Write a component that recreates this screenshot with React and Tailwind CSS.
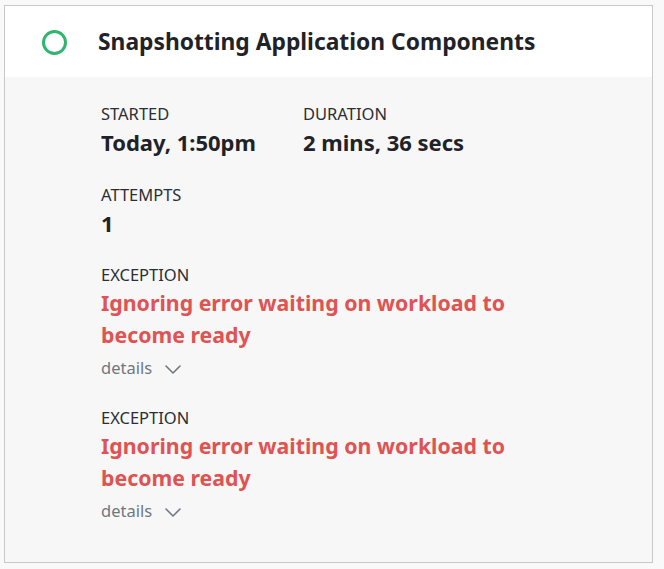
const font = { fontFamily: '"Noto Sans", "Open Sans", sans-serif' };

function Chevron() {
  return (
    <svg width="16" height="9" viewBox="0 0 16 9" fill="none" className="mt-[2px]">
      <polyline points="1,1 8,8 15,1" stroke="currentColor" strokeWidth="1.6" strokeLinecap="round" strokeLinejoin="round" />
    </svg>
  );
}

function Field({ label, value }) {
  return (
    <div className="flex flex-col whitespace-nowrap">
      <span className="text-[16.5px] leading-[22px] text-[#2b2f33] uppercase">{label}</span>
      <span className="text-[22px] leading-[30px] font-bold text-[#1f2328] mt-[2px]">{value}</span>
    </div>
  );
}

function Exception({ message }) {
  return (
    <div className="flex flex-col">
      <span className="text-[16.5px] leading-[22px] text-[#2b2f33]">EXCEPTION</span>
      <span className="w-[440px] text-[21.3px] leading-[32px] font-bold text-[#df5353] mt-[1px]">{message}</span>
      <button className="flex items-center gap-[13px] mt-[6px] text-[16.5px] leading-[22px] text-[#6f7780]">
        details
        <Chevron />
      </button>
    </div>
  );
}

export default function App() {
  return (
    <div className="min-h-screen bg-[#f9f9f9] pt-[5px] pl-[4px]" style={font}>
      <div className="w-[649px] h-[558px] border-[1.5px] border-[#c8c8c8] bg-[#f7f7f7] flex flex-col">
        <div className="h-[71px] bg-white flex items-center pl-[37px] gap-[31px] pt-[2px]">
          <span className="w-[25px] h-[25px] rounded-full border-[3px] border-[#2fb56f]" />
          <h1 className="text-[22.8px] font-bold text-[#1f2328]">Snapshotting Application Components</h1>
        </div>
        <div className="pl-[96px] pt-[26px] flex flex-col">
          <div className="flex gap-[48px]">
            <div className="w-[154px]">
              <Field label="Started" value="Today, 1:50pm" />
            </div>
            <Field label="Duration" value="2 mins, 36 secs" />
          </div>
          <div className="mt-[27px]">
            <Field label="Attempts" value="1" />
          </div>
          <div className="mt-[26px]">
            <Exception message="Ignoring error waiting on workload to become ready" />
          </div>
          <div className="mt-[28px]">
            <Exception message="Ignoring error waiting on workload to become ready" />
          </div>
        </div>
      </div>
    </div>
  );
}
